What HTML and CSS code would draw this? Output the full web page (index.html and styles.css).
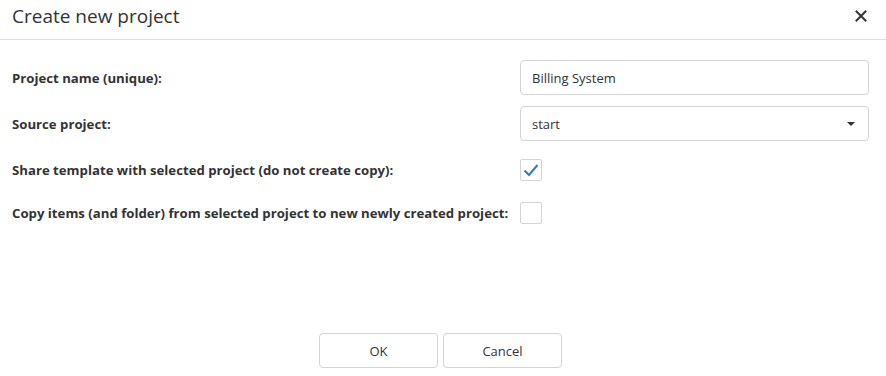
FILE: index.html
```html
<!DOCTYPE html>
<html lang="en">
<head>
  <meta charset="UTF-8">
  <title>Create new project</title>
  <link rel="stylesheet" href="styles.css">
</head>
<body>

  <div class="dialog">
    <header class="dialog-header">
      <h1>Create new project</h1>
      <button class="close-btn" type="button" aria-label="Close">
        <svg width="12" height="12" viewBox="0 0 12 12">
          <path d="M1.5 1.5 L10.5 10.5 M10.5 1.5 L1.5 10.5" stroke="#333" stroke-width="2" stroke-linecap="square"/>
        </svg>
      </button>
    </header>

    <form class="dialog-body">
      <div class="form-row">
        <label for="name">Project name (unique):</label>
        <input type="text" id="name" class="field" value="Billing System">
      </div>

      <div class="form-row">
        <label for="source">Source project:</label>
        <div class="field select">
          <span>start</span>
          <span class="caret"></span>
        </div>
      </div>

      <div class="form-row check-row">
        <label>Share template with selected project (do not create copy):</label>
        <span class="checkbox">
          <svg width="16" height="14" viewBox="0 0 16 14">
            <path d="M1.5 7.5 L6 12 L14.5 2" fill="none" stroke="#2b7bc4" stroke-width="2"/>
          </svg>
        </span>
      </div>

      <div class="form-row check-row">
        <label>Copy items (and folder) from selected project to new newly created project:</label>
        <span class="checkbox"></span>
      </div>
    </form>

    <footer class="dialog-footer">
      <button type="button" class="btn">OK</button>
      <button type="button" class="btn">Cancel</button>
    </footer>
  </div>

</body>
</html>
```

FILE: styles.css
```css
/* Global reset */
* {
  margin: 0;
  padding: 0;
  box-sizing: border-box;
  font-family: 'Open Sans', 'Noto Sans', sans-serif;
}

body {
  background-color: #fff;
  color: #333;
  width: 886px;
  height: 376px;
  overflow: hidden;
}

.dialog {
  display: flex;
  flex-direction: column;
  height: 376px;
}

.dialog-header {
  display: flex;
  align-items: center;
  justify-content: space-between;
  height: 40px;
  padding: 0 18px 0 12px;
  border-bottom: 1px solid #dedede;
}

.dialog-header h1 {
  font-size: 19px;
  font-weight: 400;
  color: #333;
  margin-top: -7px;
}

.close-btn {
  background: none;
  border: none;
  width: 14px;
  height: 14px;
  display: flex;
  align-items: center;
  justify-content: center;
  margin-top: -7px;
  cursor: pointer;
}

.dialog-body {
  display: flex;
  flex-direction: column;
  padding: 20px 17px 0 12px;
  flex: 1;
}

.form-row {
  display: grid;
  grid-template-columns: 508px 1fr;
  align-items: center;
  height: 35px;
  margin-bottom: 11px;
}

.form-row label {
  font-size: 13.2px;
  font-weight: 700;
  color: #333;
}

.check-row {
  height: 22px;
  margin-bottom: 21px;
}

.form-row:nth-child(2) {
  margin-bottom: 18px;
}

.field {
  height: 35px;
  border: 1px solid #d4d4d4;
  border-radius: 4px;
  padding: 0 11px;
  font-size: 13px;
  color: #333;
  background-color: #fff;
}

.select {
  display: flex;
  align-items: center;
  justify-content: space-between;
  padding-right: 13px;
}

.caret {
  width: 0;
  height: 0;
  border-left: 4px solid transparent;
  border-right: 4px solid transparent;
  border-top: 4px solid #333;
}

.checkbox {
  width: 22px;
  height: 22px;
  border: 1px solid #d4d4d4;
  border-radius: 2px;
  display: flex;
  align-items: center;
  justify-content: center;
}

.dialog-footer {
  display: flex;
  justify-content: center;
  gap: 5px;
  padding: 0 5px 8px 0;
}

.btn {
  width: 119px;
  height: 35px;
  border: 1px solid #d4d4d4;
  border-radius: 4px;
  background-color: #fff;
  font-size: 13px;
  color: #333;
  cursor: pointer;
}
```
